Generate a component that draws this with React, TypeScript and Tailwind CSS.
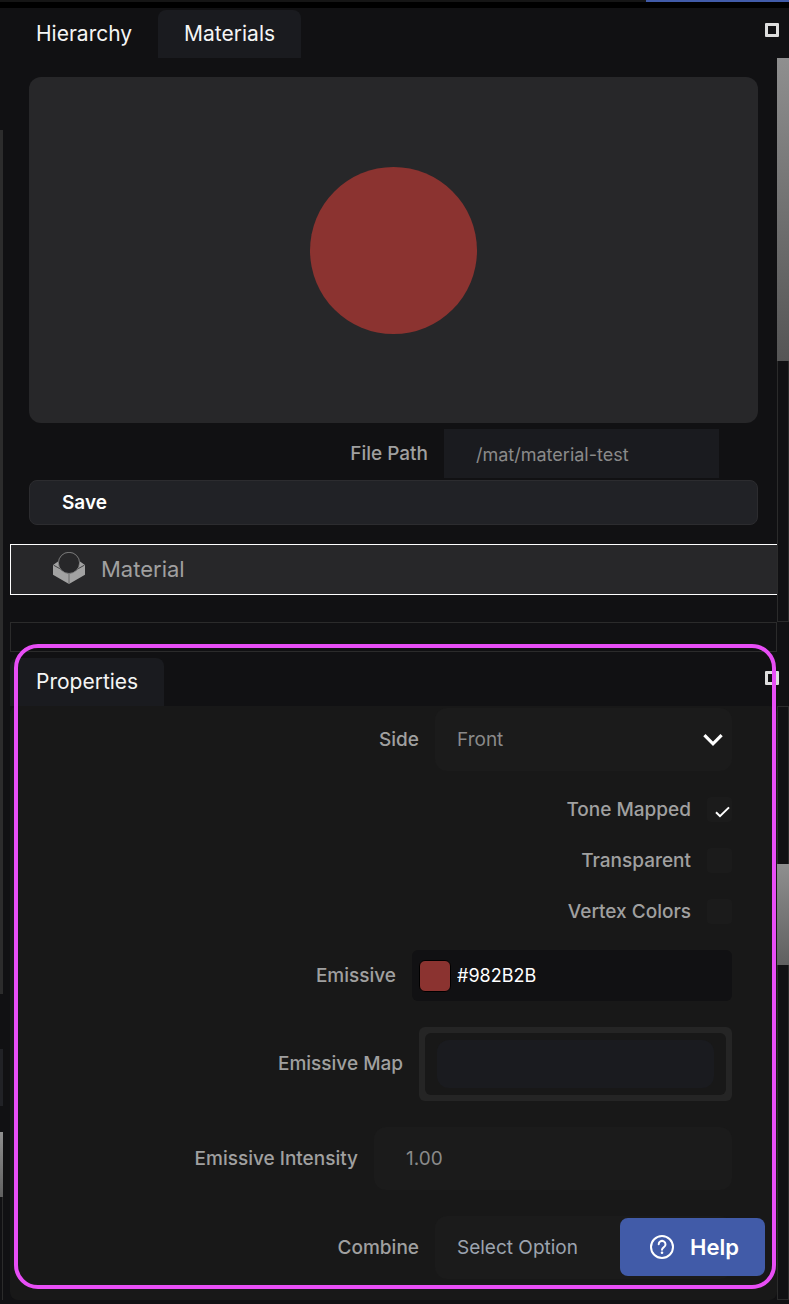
import { useId, useState } from "react";
import type { ReactNode } from "react";

function MaximizeButton({ label }: { label: string }) {
  return (
    <button
      type="button"
      aria-label={label}
      className="size-3.5 rounded-[1px] border-3 border-[#dedede]"
    />
  );
}

function Tab({ children, active = false }: { children: ReactNode; active?: boolean }) {
  return (
    <button
      type="button"
      role="tab"
      aria-selected={active}
      className={
        active
          ? "h-12 rounded-t-lg bg-[#1a1b1f] px-[26px] text-[21px] text-[#f5f5f5]"
          : "h-12 px-[26px] text-[21px] text-[#f5f5f5]"
      }
    >
      {children}
    </button>
  );
}

function Row({ label, htmlFor, children }: { label: string; htmlFor: string; children: ReactNode }) {
  return (
    <div className="flex items-center justify-end gap-4">
      <label htmlFor={htmlFor} className="text-[19px] leading-6 font-medium text-[#a0a0a0]">
        {label}
      </label>
      {children}
    </div>
  );
}

function SelectRow({ label, options, tone }: { label: string; options: string[]; tone: string }) {
  const id = useId();
  return (
    <Row label={label} htmlFor={id}>
      <div className="relative w-[297px]">
        <select
          id={id}
          className={`block h-[63px] w-full appearance-none rounded-xl bg-[#1b1b1b] px-[22px] pt-0.5 text-[19px] outline-none ${tone}`}
        >
          {options.map((option) => (
            <option key={option}>{option}</option>
          ))}
        </select>
        <svg
          viewBox="0 0 20 14"
          className="pointer-events-none absolute top-[25px] right-[9px] h-3.5 w-5"
          fill="none"
          stroke="#fff"
          strokeWidth="3.2"
        >
          <path d="M1.4 2.2 10 10.8l8.6-8.6" />
        </svg>
      </div>
    </Row>
  );
}

function CheckRow({ label, initial = false }: { label: string; initial?: boolean }) {
  const id = useId();
  const [checked, setChecked] = useState(initial);
  return (
    <Row label={label} htmlFor={id}>
      <div className="relative size-[25px]">
        <input
          id={id}
          type="checkbox"
          checked={checked}
          onChange={(e) => setChecked(e.target.checked)}
          className="block size-full appearance-none rounded bg-[#1b1b1b]"
        />
        {checked && (
          <svg
            viewBox="0 0 15 12"
            className="pointer-events-none absolute right-0.5 bottom-1 h-3 w-[15px]"
            fill="none"
            stroke="#fff"
            strokeWidth="2"
          >
            <path d="M1 6.2 5 10.2 14 1.4" />
          </svg>
        )}
      </div>
    </Row>
  );
}

function MaterialIcon() {
  return (
    <svg viewBox="0 0 32 32" className="mb-1 size-8 shrink-0">
      <path d="M0 13 5 9.6 6.5 15 16 21.6 25.5 15 27 9.6 32 13V22.8L16 32 0 22.8Z" fill="#a2a2a2" />
      <path d="M.6 13.2 16 21.8l15.4-8.6" fill="none" stroke="#272729" strokeWidth=".8" />
      <path d="M16 21.8V32" fill="none" stroke="#5a5a5a" strokeWidth=".8" />
      <circle cx="16" cy="10.9" r="10.6" fill="#272729" stroke="#929292" strokeWidth=".8" />
    </svg>
  );
}

function MaterialsPanel() {
  return (
    <section>
      <header className="flex items-start justify-between pt-0.5">
        <div role="tablist" className="flex">
          <Tab>Hierarchy</Tab>
          <Tab active>Materials</Tab>
        </div>
        <div className="flex pt-[13px] pr-2.5">
          <MaximizeButton label="Maximize materials" />
        </div>
      </header>
      <div className="flex">
        <div className="min-w-0 flex-1 pb-[27px]">
          <div className="px-[19px] pt-[19px]">
            <div className="flex h-[346px] items-center justify-center rounded-xl bg-[#272729]">
              <div className="size-[167px] rounded-full bg-[#8b3330]" />
            </div>
            <div className="mt-1.5 mr-[39px] flex items-center justify-end gap-4">
              <label htmlFor="file-path" className="text-[19px] leading-6 font-medium text-[#a0a0a0]">
                File Path
              </label>
              <input
                id="file-path"
                defaultValue="/mat/material-test"
                className="h-[49px] w-[275px] bg-[#1a1b1f] px-8 pt-0.5 text-[18px] text-[#8a8a8a] outline-none"
              />
            </div>
            <button
              type="button"
              className="mt-0.5 h-[45px] w-full rounded-lg border border-[#2c2c2f] bg-[#212226] px-8 pt-0.5 text-left text-[19px] font-semibold text-white"
            >
              Save
            </button>
          </div>
          <button
            type="button"
            className="mt-[19px] flex h-[51px] w-full items-center gap-4 border border-r-0 border-white bg-[#272729] px-[42px] text-[22px] text-[#a0a0a0]"
          >
            <MaterialIcon />
            Material
          </button>
        </div>
        <div className="w-3 border border-[#2b2b2b]">
          <div className="-mx-px -mt-px h-[303px] bg-linear-to-b from-[#8f8f8f] to-[#555555]" />
        </div>
      </div>
    </section>
  );
}

function PropertiesPanel() {
  return (
    <section className="relative pt-1.5">
      <header className="flex items-start justify-between">
        <div role="tablist" className="flex">
          <Tab active>Properties</Tab>
        </div>
        <div className="flex pt-[13px] pr-2.5">
          <MaximizeButton label="Maximize properties" />
        </div>
      </header>
      <div className="flex">
        <div className="flex min-w-0 flex-1 flex-col gap-[26px] rounded-lg bg-[#181818] pt-0.5 pr-[45px] pb-[21px]">
          <SelectRow label="Side" options={["Front", "Back", "Double"]} tone="text-[#8a8a8a]" />
          <CheckRow label="Tone Mapped" initial />
          <CheckRow label="Transparent" />
          <CheckRow label="Vertex Colors" />
          <Row label="Emissive" htmlFor="emissive">
            <div className="flex h-[51px] w-80 items-center gap-1.5 rounded-md bg-[#111113] px-[7px]">
              <button
                type="button"
                aria-label="Pick emissive color"
                className="size-8 shrink-0 rounded-md border border-black bg-[#8b3330]"
              />
              <input
                id="emissive"
                defaultValue="#982B2B"
                className="min-w-0 flex-1 bg-transparent text-[18px] text-white outline-none"
              />
            </div>
          </Row>
          <Row label="Emissive Map" htmlFor="emissive-map">
            <div className="h-[74px] w-[313px] rounded-md bg-[#252525] p-1.5">
              <div className="h-full rounded-md bg-[#181818] px-3 py-[7px]">
                <input
                  id="emissive-map"
                  className="block h-12 w-full rounded-xl bg-[#1a1b1f] px-4 text-[18px] text-[#8a8a8a] outline-none"
                />
              </div>
            </div>
          </Row>
          <Row label="Emissive Intensity" htmlFor="emissive-intensity">
            <input
              id="emissive-intensity"
              defaultValue="1.00"
              className="h-[63px] w-[358px] rounded-xl bg-[#1b1b1b] px-8 text-[19px] text-[#8a8a8a] outline-none"
            />
          </Row>
          <SelectRow label="Combine" options={["Select Option", "Multiply", "Mix", "Add"]} tone="text-[#9ca3af]" />
        </div>
        <div className="w-3 border border-[#2b2b2b]">
          <div className="-mx-px mt-[157px] h-[101px] bg-linear-to-b from-[#8f8f8f] to-[#606060]" />
        </div>
      </div>
      <button
        type="button"
        className="absolute right-6 bottom-6 flex h-[58px] w-[145px] items-center justify-center gap-4 rounded-lg bg-[#415ba8] pl-1 text-[22px] font-semibold text-white"
      >
        <svg viewBox="0 0 24 24" className="size-6" fill="none" stroke="currentColor" strokeWidth="2">
          <circle cx="12" cy="12" r="11" />
          <path d="M8.7 9.3a3.4 3.4 0 1 1 5.2 2.9c-1.2.8-1.9 1.3-1.9 2.6" strokeLinecap="round" />
          <circle cx="12" cy="17.8" r="1.3" fill="currentColor" stroke="none" />
        </svg>
        Help
      </button>
      <div className="pointer-events-none absolute -top-2 right-[13px] bottom-[11px] left-1 rounded-3xl border-4 border-[#e84ef6]" />
    </section>
  );
}

function LeftGutter() {
  return (
    <div className="mr-[7px] flex w-[3px] shrink-0 flex-col items-end">
      <div className="mt-[122px] h-[864px] w-full bg-[#2c2c2c]" />
      <div className="mt-[55px] h-[57px] w-full bg-[#212226]" />
      <div className="mt-[26px] h-[65px] w-full bg-linear-to-b from-[#8f8f8f] to-[#606060]" />
      <div className="w-px flex-1 bg-[#2b2b2b]" />
    </div>
  );
}

export default function App() {
  return (
    <div className="min-h-screen bg-[#111113] pb-1 font-['Inter','Liberation_Sans',sans-serif]">
      <div className="flex h-2 justify-end border-b-6 border-black bg-[#151515]">
        <div className="h-0.5 w-[143px] bg-[#415ba8]" />
      </div>
      <div className="flex">
        <LeftGutter />
        <main className="min-w-0 flex-1">
          <MaterialsPanel />
          <div className="mr-3 h-[30px] border border-[#2b2b2b]" />
          <PropertiesPanel />
        </main>
      </div>
    </div>
  );
}
